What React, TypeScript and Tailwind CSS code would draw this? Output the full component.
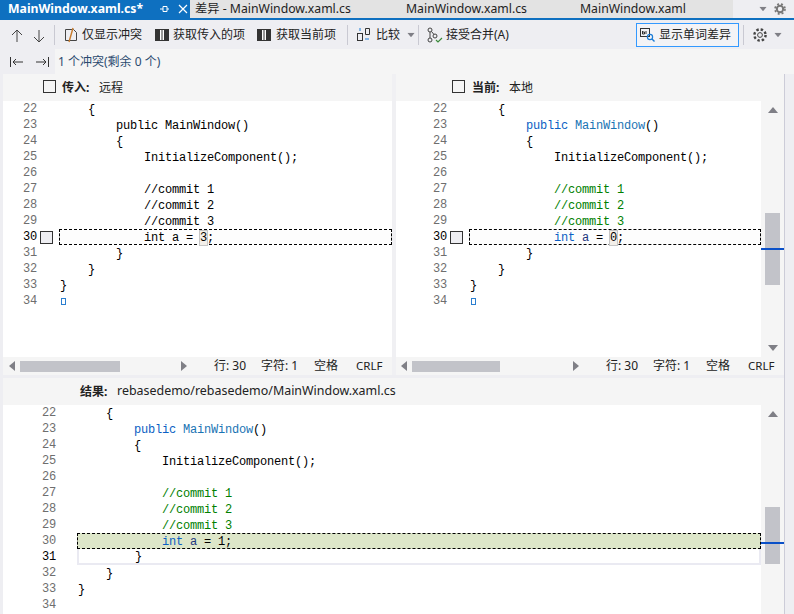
import React from 'react'

const KW = 'text-[#0b5fc4]'
const TYPE = 'text-[#1a74b4]'
const CM = 'text-[#008000]'
const VAR = 'text-[#1f377f]'

const makeLines = (colored: boolean, value: React.ReactNode): { n: number, toks: React.ReactNode }[] => {
  const k = colored ? KW : ''
  const t = colored ? TYPE : ''
  const g = colored ? CM : ''
  const v = colored ? VAR : ''
  return [
    { n: 22, toks: '    {' },
    { n: 23, toks: <>{'        '}<span className={k}>public</span> <span className={t}>MainWindow</span>()</> },
    { n: 24, toks: '        {' },
    { n: 25, toks: '            InitializeComponent();' },
    { n: 26, toks: '' },
    { n: 27, toks: <>{'            '}<span className={g}>//commit 1</span></> },
    { n: 28, toks: <>{'            '}<span className={g}>//commit 2</span></> },
    { n: 29, toks: <>{'            '}<span className={g}>//commit 3</span></> },
    { n: 30, toks: <>{'            '}<span className={k}>int</span> <span className={v}>a</span> = {value};</> },
    { n: 31, toks: '        }' },
    { n: 32, toks: '    }' },
    { n: 33, toks: '}' },
    { n: 34, toks: '' },
  ]
}

const Changed = ({ ch }: { ch: string }) => (
  <span className="bg-[#f3efe9] outline-[1.5px] outline-[#c6c6c6] outline">{ch}</span>
)

const CheckBox = ({ className }: { className: string }) => (
  <div className={"border border-[#333] " + className} />
)

const Triangle = ({ dir, className }: { dir: 'l' | 'r' | 'u' | 'd', className?: string }) => {
  const pts = { l: '6,0 6,10 0,5', r: '0,0 0,10 6,5', u: '0,6 10,6 5,0', d: '0,0 10,0 5,6' }[dir]
  const horizontal = dir === 'l' || dir === 'r'
  return (
    <svg width={horizontal ? 6 : 10} height={horizontal ? 10 : 6} className={"shrink-0 " + (className || '')}>
      <polygon points={pts} fill="#7f7f86" />
    </svg>
  )
}

const CodeLines = ({ numW, gutterW, lines, mode }: { numW: string, gutterW: string, lines: { n: number, toks: React.ReactNode }[], mode: 'side' | 'result' }) => (
  <div className="flex-1 min-w-0 overflow-hidden bg-white font-['Liberation_Mono',monospace] text-[12px] tracking-[-0.2px] text-black">
    {lines.map(l => {
      const conflict = l.n === 30
      return (
        <div key={l.n} className="flex h-4 items-stretch leading-[16px]">
          <div className={"shrink-0 text-right " + numW + (mode === 'result' && l.n === 31 ? ' text-black' : mode === 'side' && conflict ? ' text-black' : ' text-[#6e6e6e]')}>{l.n}</div>
          <div className={"shrink-0 flex items-center " + gutterW}>
            {mode === 'side' && conflict && <CheckBox className="ml-[3px] w-[13px] h-[13px] bg-[#eeeef2]" />}
          </div>
          <div className={"flex-1 min-w-0 whitespace-pre border " + (conflict ? 'border-dashed border-black ' + (mode === 'result' ? 'bg-[#dde6c9]' : 'bg-[#fdfdfd]') : mode === 'result' && l.n === 31 ? 'border-2 border-t-0 border-[#eaeaf2] pl-0' : 'border-transparent')}>
            {l.toks}
            {mode === 'side' && l.n === 34 && <span className="inline-block ml-px w-[5px] h-[7px] border border-[#2b7fd0]" />}
          </div>
        </div>
      )
    })}
  </div>
)

const VBar = ({ thumbTop, thumbH, markTop, down }: { thumbTop: string, thumbH: string, markTop: string, down: boolean }) => (
  <div className="w-[23px] shrink-0 bg-[#f5f5f5] flex flex-col items-center relative">
    <Triangle dir="u" className="mt-[6px]" />
    <div className={"w-[15px] bg-[#c2c3c9] " + thumbTop + " " + thumbH} />
    {down && <Triangle dir="d" className="mt-auto mb-[6px]" />}
    <div className={"absolute left-0 right-0 h-[2px] bg-[#0a50c8] " + markTop} />
  </div>
)

const StatusBar = ({ pad, thumbW, gapW }: { pad: string, thumbW: string, gapW: string }) => (
  <div className="h-[18px] flex items-center bg-[#f5f5f5] text-[12px] text-[#222]">
    <Triangle dir="l" className={pad} />
    <div className={"h-[11px] ml-[5px] bg-[#c2c3c9] " + thumbW} />
    <Triangle dir="r" className={gapW} />
    <span className="ml-[27px] w-[47px] whitespace-nowrap">行: 30</span>
    <span className="w-[53px] whitespace-nowrap">字符: 1</span>
    <span className="w-[42px] whitespace-nowrap">空格</span>
    <span className="whitespace-nowrap text-[11.5px]">CRLF</span>
  </div>
)

const Icon = ({ children, w = 16 }: { children: React.ReactNode, w?: number }) => (
  <svg width={w} height="16" viewBox={`0 0 ${w} 16`} fill="none" className="shrink-0">{children}</svg>
)

const Columns = () => (
  <Icon w={14}>
    <rect x="0.5" y="2.5" width="13" height="11" fill="#fff" stroke="#333" />
    <rect x="1" y="3" width="4" height="10" fill="#333" />
    <rect x="9" y="3" width="4" height="10" fill="#333" />
    <line x1="7" y1="3" x2="7" y2="13" stroke="#333" />
  </Icon>
)

const Sep = ({ className }: { className: string }) => <div className={"w-px h-5 bg-[#c9c9d2] shrink-0 " + className} />

const App = () => {
  const leftLines = makeLines(false, <Changed ch="3" />)
  const rightLines = makeLines(true, <Changed ch="0" />)
  const resultLines = makeLines(true, '1')

  return (
    <div className="w-[794px] h-[614px] overflow-hidden flex flex-col bg-[#eeeef2] font-['Noto_Sans','Noto_Sans_CJK_SC',sans-serif] text-[12px] text-[#222]">
      {/* tabs */}
      <div className="h-[18px] flex shrink-0 items-center bg-[#e3e3e3] text-[12.25px] leading-[18px]">
        <div className="w-[190px] h-full bg-[#0e70c0] text-white flex items-center shrink-0">
          <span className="ml-[8px] font-bold text-[12.25px] whitespace-nowrap w-[144px]">MainWindow.xaml.cs*</span>
          <svg width="10" height="10" className="ml-[7px]"><path d="M1 5h3M4 2.5v5h4v-5zM8 5h2" stroke="#fff" fill="none" /></svg>
          <svg width="10" height="10" className="ml-[9px]"><path d="M1 1l8 8M9 1l-8 8" stroke="#fff" strokeWidth="1.2" /></svg>
        </div>
        <span className="ml-[5px] w-[211px] whitespace-nowrap">差异 - MainWindow.xaml.cs</span>
        <span className="w-[174px] whitespace-nowrap">MainWindow.xaml.cs</span>
        <span className="whitespace-nowrap">MainWindow.xaml</span>
        <div className="ml-auto w-[61px] h-full bg-[#eeeef2] flex items-center">
          <Triangle dir="d" className="ml-[25px] scale-75" />
          <svg width="12" height="12" viewBox="0 0 12 12" className="ml-[6px]"><circle cx="6" cy="6" r="3.2" fill="none" stroke="#777" strokeWidth="2" /><circle cx="6" cy="6" r="5" fill="none" stroke="#777" strokeWidth="1.6" strokeDasharray="2 2" /></svg>
        </div>
      </div>
      <div className="h-[2px] bg-[#0e70c0] shrink-0" />

      {/* toolbar */}
      <div className="h-[29px] shrink-0 flex items-center whitespace-nowrap text-[12px]">
        <svg width="12" height="14" className="ml-[11px] mt-[2px]"><path d="M6 13V1M1 6l5-5 5 5" stroke="#444" fill="none" /></svg>
        <svg width="12" height="14" className="ml-[10px] mt-[2px]"><path d="M6 1v12M1 8l5 5 5-5" stroke="#444" fill="none" /></svg>
        <Sep className="ml-[9px]" />
        <span className="ml-[9px]"><Icon w={14}><path d="M1.5 2.5h8l3 3v8h-11z" stroke="#444" /><path d="M9 1L5 15" stroke="#c77a2a" strokeWidth="1.4" /></Icon></span>
        <span className="ml-[4px] w-[73px]">仅显示冲突</span>
        <Columns />
        <span className="ml-[4px] w-[84px]">获取传入的项</span>
        <Columns />
        <span className="ml-[5px] w-[71px]">获取当前项</span>
        <Sep className="" />
        <span className="ml-[9px]"><Icon w={14}><rect x="0.5" y="6.5" width="5" height="7" stroke="#333" /><path d="M8.5 1.5h4v6h-4z" stroke="#333" /><path d="M3 1v3M8 12h4" stroke="#1c7cd6" /></Icon></span>
        <span className="ml-[5px] w-[30px]">比较</span>
        <Triangle dir="d" className="scale-75" />
        <Sep className="ml-[2px]" />
        <span className="ml-[8px]"><Icon><circle cx="3" cy="3" r="2" stroke="#444" /><circle cx="3" cy="13" r="2" stroke="#444" /><circle cx="8" cy="9" r="2" stroke="#444" /><path d="M3 5v6M4.5 4.5L7 7.5" stroke="#444" /><path d="M9 13l2 2 4-4" stroke="#3c8a3c" strokeWidth="1.2" /></Icon></span>
        <span className="ml-[3px] w-[190px]">接受合并(A)</span>
        <div className="w-[103px] h-[24px] border border-[#3399ff] flex items-center bg-[#f3f3f6]">
          <span className="ml-[3px]"><Icon w={15}><rect x="0.5" y="1.5" width="9" height="8" stroke="#333" /><path d="M2.5 4v3h2V5H2.5M6 4v3" stroke="#333" /><circle cx="10" cy="10" r="2.6" stroke="#1c7cd6" strokeWidth="1.2" /><path d="M12 12l2.5 2.5" stroke="#1c7cd6" strokeWidth="1.4" /></Icon></span>
          <span className="ml-[4px]">显示单词差异</span>
        </div>
        <Sep className="ml-[4px]" />
        <svg width="16" height="16" viewBox="0 0 16 16" className="ml-[8px]"><circle cx="8" cy="8" r="2.4" fill="none" stroke="#444" /><circle cx="8" cy="8" r="5.6" fill="none" stroke="#444" strokeWidth="2.4" strokeDasharray="2.4 2" /></svg>
        <Triangle dir="d" className="ml-[5px] scale-75" />
      </div>

      {/* conflict nav */}
      <div className="h-[25px] shrink-0 flex items-center bg-[#f5f5f5]">
        <div className="w-[55px] h-full bg-[#eeeef2] flex items-center">
          <svg width="13" height="10" className="ml-[10px]"><path d="M0.5 0v10M3 5h10M6 2L3 5l3 3" stroke="#333" fill="none" /></svg>
          <svg width="13" height="10" className="ml-[13px]"><path d="M12.5 0v10M0 5h10M7 2l3 3-3 3" stroke="#333" fill="none" /></svg>
        </div>
        <span className="ml-[3px] whitespace-nowrap text-[#2b4a6f]">1 个冲突(剩余 0 个)</span>
      </div>

      {/* panes */}
      <div className="flex-1 min-h-0 flex">
        <div className="w-[3px] shrink-0 bg-[#eeeef2]" />
        <div className="w-[781px] shrink-0 flex flex-col">
          <div className="h-[301px] flex shrink-0 bg-[#f5f5f5]">
            <div className="w-[389px] shrink-0 flex flex-col">
              <div className="h-[27px] flex items-center">
                <CheckBox className="ml-[40px] mb-[2px] w-[13px] h-[13px]" />
                <span className="ml-[6px] w-[37px] font-bold">传入:</span>
                <span>远程</span>
              </div>
              <div className="flex-1 flex min-h-0">
                <CodeLines numW="w-[34px]" gutterW="w-[22px]" lines={leftLines} mode="side" />
              </div>
              <StatusBar pad="ml-[6px]" thumbW="w-[100px]" gapW="ml-[61px]" />
            </div>
            <div className="w-[4px] shrink-0 bg-[#f0f0f3]" />
            <div className="flex-1 min-w-0 flex flex-col">
              <div className="h-[27px] flex items-center">
                <CheckBox className="ml-[56px] mb-[2px] w-[13px] h-[13px]" />
                <span className="ml-[7px] w-[37px] font-bold">当前:</span>
                <span>本地</span>
              </div>
              <div className="flex-1 flex min-h-0">
                <CodeLines numW="w-[51px]" gutterW="w-[22px]" lines={rightLines} mode="side" />
                <VBar thumbTop="mt-[100px]" thumbH="h-[72px]" markTop="top-[147px]" down />
              </div>
              <StatusBar pad="ml-[5px]" thumbW="w-[88px]" gapW="ml-[73px]" />
            </div>
          </div>
          <div className="h-[3px] shrink-0 bg-[#eeeef2]" />
          <div className="h-[27px] shrink-0 flex items-center bg-[#f5f5f5] whitespace-nowrap">
            <span className="ml-[77px] w-[37px] font-bold">结果:</span>
            <span className="text-[12.45px]">rebasedemo/rebasedemo/MainWindow.xaml.cs</span>
          </div>
          <div className="flex-1 min-h-0 flex overflow-hidden">
            <CodeLines numW="w-[53px]" gutterW="w-[21px]" lines={resultLines} mode="result" />
            <VBar thumbTop="mt-[90px]" thumbH="h-[57px]" markTop="top-[137px]" down={false} />
          </div>
        </div>
        <div className="flex-1 border-l border-[#ccccd8] bg-[#eeeef2]" />
      </div>
    </div>
  )
}

export default App
